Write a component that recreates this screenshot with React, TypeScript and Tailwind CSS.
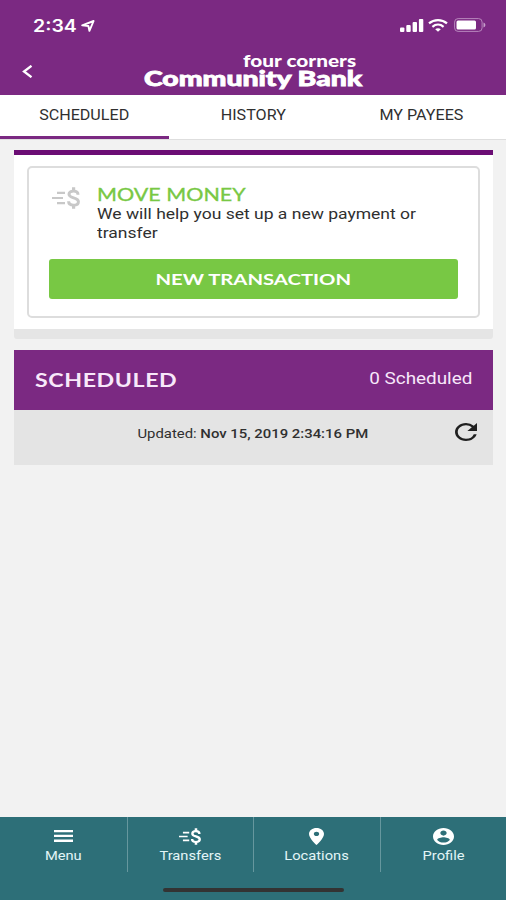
import React from 'react';

const MoneyIcon = ({ className }: { className: string }) => (
  <svg viewBox="0 0 28 24" preserveAspectRatio="none" className={className} fill="none" stroke="currentColor">
    <path d="M5 6.5h8M0 12h11M5 17.5h8" strokeWidth="2.4" />
    <path d="M26 8.4C26 5.6 24.4 4.4 21.6 4.4S17 5.8 17 8c0 5 9.4 2.6 9.4 8 0 2.4-1.8 3.8-4.8 3.8s-5-1.6-5-4.2" strokeWidth="3" />
    <path d="M21.6 0.3v4.1M21.6 19.8v4" strokeWidth="3.2" />
  </svg>
);

const MenuIcon = ({ className }: { className: string }) => (
  <svg viewBox="0 0 19 12" preserveAspectRatio="none" className={className} fill="currentColor">
    <path d="M0 0h19v2.3H0zM0 4.8h19v2.3H0zM0 9.6h19v2.3H0z" />
  </svg>
);

const PinIcon = ({ className }: { className: string }) => (
  <svg viewBox="5 2 14 20" preserveAspectRatio="none" className={className} fill="currentColor">
    <path d="M12 2C8.13 2 5 5.13 5 9c0 5.25 7 13 7 13s7-7.75 7-13c0-3.87-3.13-7-7-7zm0 9.5c-1.38 0-2.5-1.12-2.5-2.5s1.12-2.5 2.5-2.5 2.5 1.12 2.5 2.5-1.12 2.5-2.5 2.5z" />
  </svg>
);

const ProfileIcon = ({ className }: { className: string }) => (
  <svg viewBox="2 2 20 20" preserveAspectRatio="none" className={className} fill="currentColor">
    <path d="M12 2C6.48 2 2 6.48 2 12s4.48 10 10 10 10-4.48 10-10S17.52 2 12 2zm0 3c1.66 0 3 1.34 3 3s-1.34 3-3 3-3-1.34-3-3 1.34-3 3-3zm0 14.2c-2.5 0-4.71-1.28-6-3.22.03-1.99 4-3.08 6-3.08 1.99 0 5.97 1.09 6 3.08-1.29 1.94-3.5 3.22-6 3.22z" />
  </svg>
);

const tabs = [
  { label: 'SCHEDULED', active: true },
  { label: 'HISTORY', active: false },
  { label: 'MY PAYEES', active: false },
];

const navItems = [
  { label: 'Menu', icon: <MenuIcon className="h-3 w-[19px]" /> },
  { label: 'Transfers', icon: <MoneyIcon className="h-[17px] w-[22px]" /> },
  { label: 'Locations', icon: <PinIcon className="h-[17px] w-[15px]" /> },
  { label: 'Profile', icon: <ProfileIcon className="h-[17px] w-[21px]" /> },
];

const StatusBar = () => (
  <div className="flex h-[50px] items-center justify-between pl-[33px] pr-5">
    <div className="flex items-center">
      <div className="w-[48px] pt-[3px]">
        <span className="inline-block origin-left scale-x-[1.15] font-['Inter'] text-[17px] font-semibold">2:34</span>
      </div>
      <svg viewBox="0 0 14 12" className="mt-0.5 h-3 w-3.5" fill="none" stroke="currentColor" strokeWidth="1.9" strokeLinejoin="round">
        <path d="M1.2 5.4 12.6 1 8.4 10.8 7.4 6z" />
      </svg>
    </div>
    <div className="flex items-center">
      <svg viewBox="0 0 24 13" className="h-[13px] w-6" fill="currentColor">
        <rect x="0" y="8.5" width="4.4" height="4.5" rx="1" />
        <rect x="6.3" y="6" width="4.4" height="7" rx="1" />
        <rect x="12.6" y="3" width="4.4" height="10" rx="1" />
        <rect x="18.9" y="0" width="4.4" height="13" rx="1" />
      </svg>
      <svg viewBox="0 0 20 13" className="ml-1 h-[13px] w-5" fill="none" stroke="currentColor" strokeWidth="2.2">
        <path d="M1 4.4C6 0 14 0 19 4.4M4.4 7.8c3.3-2.8 7.9-2.8 11.2 0" />
        <path d="M7.2 10.2c1.6-1.4 4-1.4 5.6 0L10 12.8z" fill="currentColor" stroke="none" />
      </svg>
      <svg viewBox="0 0 32 14" className="ml-1.5 h-3.5 w-8">
        <rect x="0.6" y="0.6" width="27.5" height="12.8" rx="3.5" fill="none" stroke="#b786bc" />
        <rect x="2.5" y="2.5" width="19.5" height="9" rx="1.5" fill="white" />
        <path d="M29.5 4.5c2.5.8 2.5 4.2 0 5z" fill="#c79fcb" />
      </svg>
    </div>
  </div>
);

const App = () => {
  return (
    <div className="flex h-[900px] w-[506px] flex-col overflow-hidden bg-[#f2f2f2] font-['Roboto',sans-serif] text-[#303030]">
      <header className="h-[95px] shrink-0 bg-[#7b2982] text-white">
        <StatusBar />
        <div className="flex h-[45px]">
          <svg viewBox="0 0 11 13" className="ml-[22px] mt-[15px] h-[13px] w-[11px]" fill="none" stroke="currentColor" strokeWidth="2.3">
            <path d="M9.5 0.8 2 6.5l7.5 5.7" />
          </svg>
          <div className="ml-[111px] w-[220px] font-['Lato',sans-serif] font-black whitespace-nowrap">
            <div className="ml-[99px] mt-[4px] flex h-[15px] text-base leading-[14px]">
              <span className="origin-left scale-x-[1.3]">four corners</span>
            </div>
            <div className="flex h-[20px] text-xl leading-[18px]">
              <span className="origin-left scale-x-[1.415] [-webkit-text-stroke:0.8px_white]">Community Bank</span>
            </div>
          </div>
        </div>
      </header>

      <nav className="flex h-[45px] shrink-0 border-b border-[#dedede] bg-white">
        {tabs.map((tab) => (
          <button
            key={tab.label}
            className={`flex-1 pb-px text-sm ${tab.active ? 'border-b-[3px] border-[#7b2982]' : 'border-b-[3px] border-transparent'}`}
          >
            <span className="inline-block scale-x-[1.15] whitespace-nowrap">{tab.label}</span>
          </button>
        ))}
      </nav>

      <main className="flex-1 pl-3.5 pr-[13px]">
        <section className="mt-2.5 h-[189px] rounded-b-[3px] border-t-[5px] border-b-[10px] border-t-[#6b0d74] border-b-[#e5e5e5] bg-white px-[13px] pt-[11px]">
          <div className="h-[152px] rounded-[5px] border-2 border-[#dddddd] px-5 pt-[17px]">
            <div className="flex h-[74px]">
              <MoneyIcon className="ml-[3px] mt-[2px] h-[22px] w-[28px] text-[#c8c8c8]" />
              <div className="ml-[17px] whitespace-nowrap">
                <h2 className="flex h-5 font-['Lato',sans-serif] text-[17px] leading-[19px] text-[#78c844] [-webkit-text-stroke:0.3px_#78c844]">
                  <span className="origin-left scale-x-[1.265]">MOVE MONEY</span>
                </h2>
                <p className="origin-left scale-x-[1.167] text-[15px] leading-[19px]">
                  We will help you set up a new payment or
                  <br />
                  transfer
                </p>
              </div>
            </div>
            <button className="h-10 w-full rounded-[3px] bg-[#78c844] font-['Lato',sans-serif] text-base font-bold text-white">
              <span className="inline-block scale-x-[1.267]">NEW TRANSACTION</span>
            </button>
          </div>
        </section>

        <section className="mt-[11px]">
          <div className="flex h-[60px] items-center justify-between bg-[#7b2982] pl-[21px] pr-[21px] text-[#f8e8fa]">
            <h2 className="origin-left scale-x-[1.22] font-['Lato',sans-serif] text-[19px] font-bold tracking-wide">SCHEDULED</h2>
            <span className="mb-[3px] origin-right scale-x-[1.18] text-base">0 Scheduled</span>
          </div>
          <div className="flex h-[55px] bg-[#e4e4e4] text-[13px]">
            <p className="w-[441px] pl-[37px] pt-3.5 text-center">
              <span className="inline-block scale-x-[1.145] whitespace-nowrap">
                Updated: <b className="font-medium">Nov 15, 2019 2:34:16 PM</b>
              </span>
            </p>
            <svg viewBox="4 4 16 16" preserveAspectRatio="none" className="mt-[13px] h-[18px] w-[22px]" fill="#202020">
              <path d="M17.65 6.35A7.96 7.96 0 0 0 12 4c-4.42 0-7.99 3.58-7.99 8s3.57 8 7.99 8c3.73 0 6.84-2.55 7.73-6h-2.08A5.99 5.99 0 0 1 12 18c-3.31 0-6-2.69-6-6s2.69-6 6-6c1.66 0 3.14.69 4.22 1.78L13 11h7V4z" />
            </svg>
          </div>
        </section>
      </main>

      <footer className="h-[83px] shrink-0 bg-[#2d6f78] text-white">
        <div className="flex h-[55px] divide-x divide-[#66979e] pl-px">
          {navItems.map((item) => (
            <button key={item.label} className="flex flex-1 flex-col items-center pt-[9px] text-[13px]">
              <span className="flex h-5 items-center">{item.icon}</span>
              <span className="scale-x-[1.13] leading-[19px] text-[#e2f5f7]">{item.label}</span>
            </button>
          ))}
        </div>
        <div className="mx-auto mt-4 h-1 w-[181px] rounded-full bg-[#333333]" />
      </footer>
    </div>
  );
};

export default App;
